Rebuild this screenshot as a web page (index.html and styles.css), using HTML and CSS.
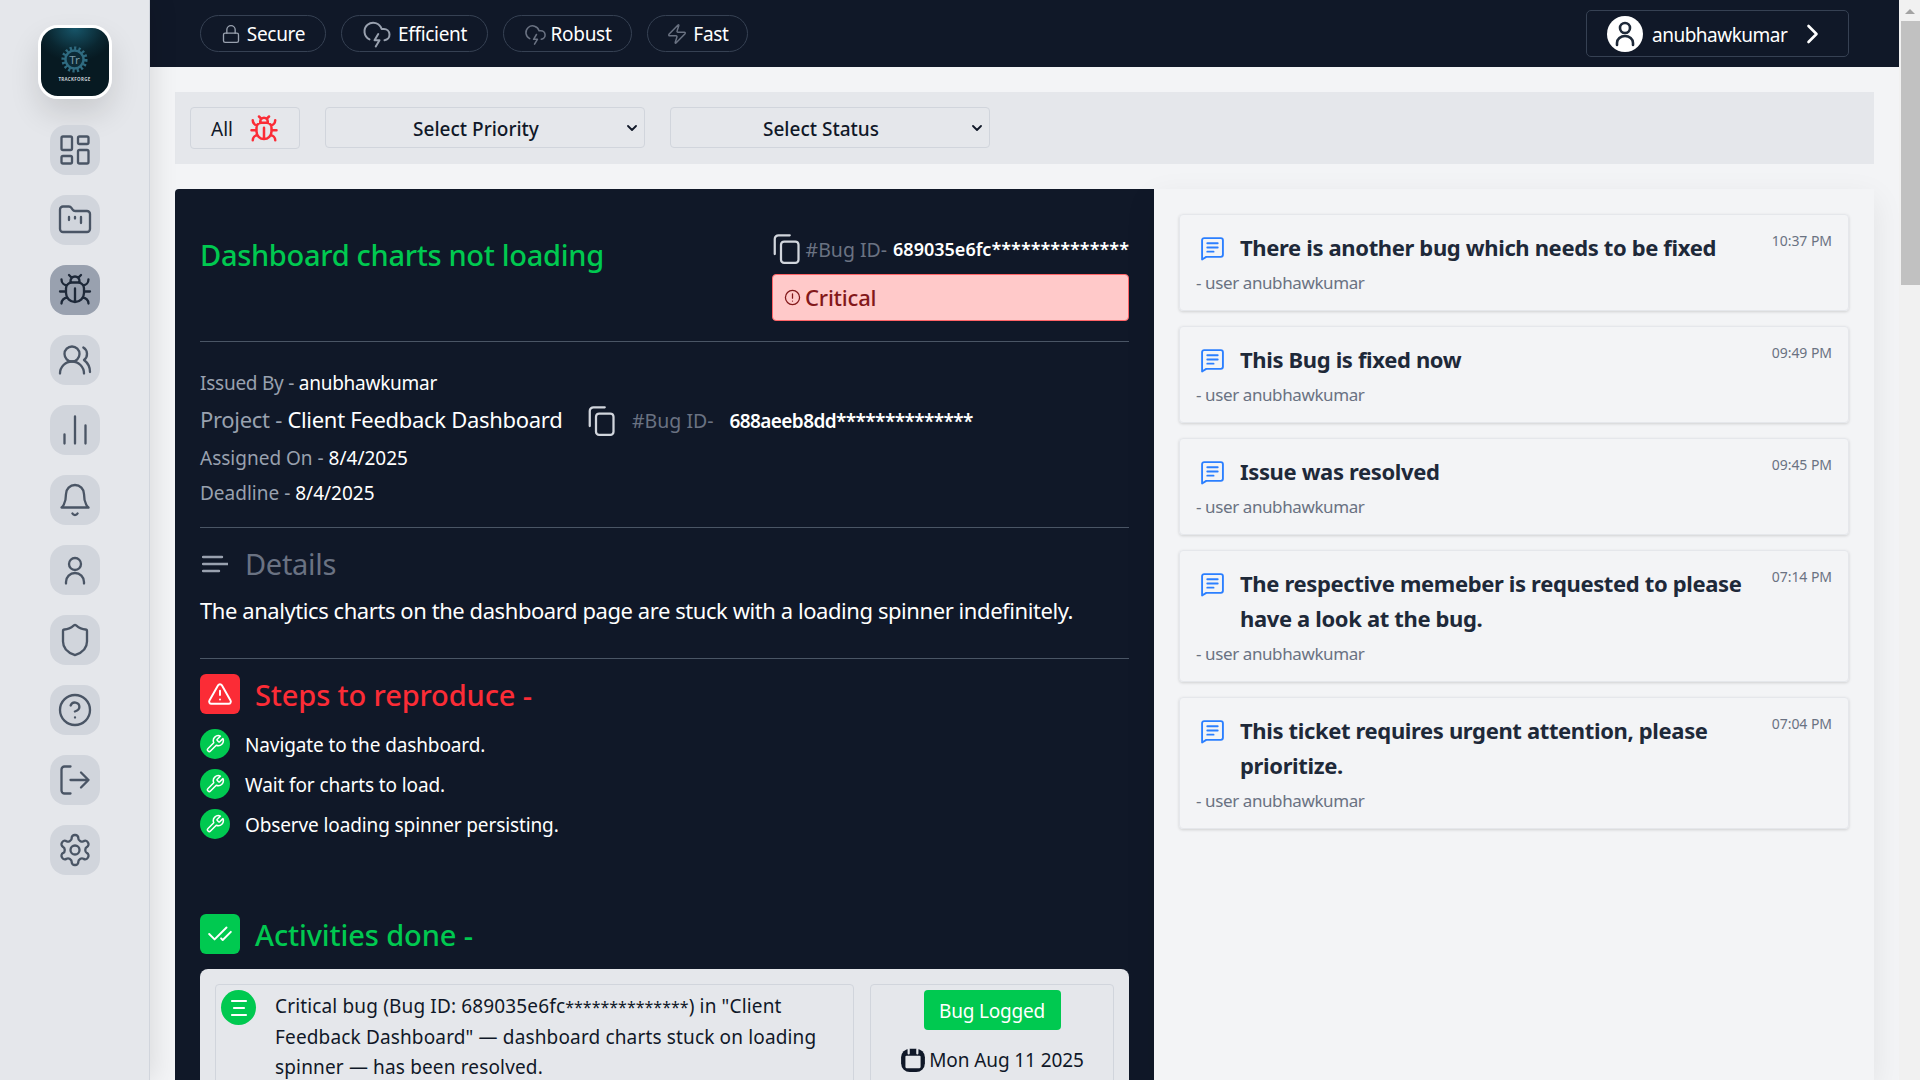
FILE: index.html
```html
<!DOCTYPE html>
<html lang="en">
<head>
    <meta charset="UTF-8">
    <meta name="viewport" content="width=device-width, initial-scale=1.0">
    <title>TrackForge - Bugs</title>
    <link rel="stylesheet" href="styles.css">
</head>
<body>
    <!-- shared icons -->
    <svg class="defs" aria-hidden="true">
        <symbol id="i-bug" viewBox="0 0 24 24"><path d="m8 2 1.88 1.88M14.12 3.88 16 2M9 7.13v-1a3.003 3.003 0 1 1 6 0v1M12 20c-3.3 0-6-2.7-6-6v-3a4 4 0 0 1 4-4h4a4 4 0 0 1 4 4v3c0 3.3-2.7 6-6 6M12 20v-9M6.53 9C4.6 8.8 3 7.1 3 5M6 13H2M3 21c0-2.1 1.7-3.9 3.8-4M20.97 5c0 2.1-1.6 3.8-3.5 4M22 13h-4M17.2 17c2.1.1 3.8 1.9 3.8 4"/></symbol>
        <symbol id="i-cloud" viewBox="0 0 24 24"><path d="M6 16.326A7 7 0 1 1 15.71 8h1.79a4.5 4.5 0 0 1 .5 8.973M13 12l-3 5h4l-3 5"/></symbol>
        <symbol id="i-copy" viewBox="0 0 24 24"><rect x="8" y="6" width="14" height="17" rx="2.5"/><path d="M3 16V4a3 3 0 0 1 3-3h9"/></symbol>
        <symbol id="i-wrench" viewBox="0 0 24 24"><path d="M14.7 6.3a1 1 0 0 0 0 1.4l1.6 1.6a1 1 0 0 0 1.4 0l3.77-3.77a6 6 0 0 1-7.94 7.94l-6.91 6.91a2.12 2.12 0 0 1-3-3l6.91-6.91a6 6 0 0 1 7.94-7.94l-3.76 3.76z"/></symbol>
        <symbol id="i-msg" viewBox="0 0 24 24"><path d="M4 2h16a2 2 0 0 1 2 2v14a2 2 0 0 1-2 2H6l-4 2.5V4a2 2 0 0 1 2-2z"/><path d="M7 7h10M7 11h10M7 15h6"/></symbol>
    </svg>

    <div class="app">
        <!-- Sidebar -->
        <aside class="sidebar">
            <div class="logo">
                <svg class="logo-gear" viewBox="0 0 40 40">
                    <circle cx="20" cy="20" r="15.5" class="gear-teeth"/>
                    <circle cx="20" cy="20" r="12.5" class="gear-ring"/>
                    <text x="20" y="26" text-anchor="middle" class="gear-t">Tr</text>
                </svg>
                <span class="logo-text">TRACKFORGE</span>
            </div>
            <nav class="nav">
                <a class="nav-item"><svg viewBox="0 0 24 24"><rect x="3" y="3" width="7" height="9" rx="1"/><rect x="14" y="3" width="7" height="5" rx="1"/><rect x="14" y="12" width="7" height="9" rx="1"/><rect x="3" y="16" width="7" height="5" rx="1"/></svg></a>
                <a class="nav-item"><svg viewBox="0 0 24 24"><path d="M4 20h16a2 2 0 0 0 2-2V8a2 2 0 0 0-2-2h-7.93a2 2 0 0 1-1.66-.9l-.82-1.2A2 2 0 0 0 7.93 3H4a2 2 0 0 0-2 2v13c0 1.1.9 2 2 2ZM8 10v2M12 10v1M16 10v4"/></svg></a>
                <a class="nav-item active"><svg><use href="#i-bug"/></svg></a>
                <a class="nav-item"><svg viewBox="0 0 24 24"><path d="M18 21a8 8 0 0 0-16 0"/><circle cx="10" cy="8" r="5"/><path d="M22 20c0-3.37-2-6.5-4-8a5 5 0 0 0-.45-8.3"/></svg></a>
                <a class="nav-item"><svg viewBox="0 0 24 24"><path d="M5 21v-6M12 21V3M19 21V9"/></svg></a>
                <a class="nav-item"><svg viewBox="0 0 24 24"><path d="M6 8a6 6 0 0 1 12 0c0 7 3 9 3 9H3s3-2 3-9M10.3 21a1.94 1.94 0 0 0 3.4 0"/></svg></a>
                <a class="nav-item"><svg viewBox="0 0 24 24"><circle cx="12" cy="8" r="4"/><path d="M18 21v-1a6 6 0 0 0-12 0v1"/></svg></a>
                <a class="nav-item"><svg viewBox="0 0 24 24"><path d="M20 13c0 5-3.5 7.5-7.66 8.95a1 1 0 0 1-.67-.01C7.5 20.5 4 18 4 13V6a1 1 0 0 1 1-1c2 0 4.5-1.2 6.24-2.72a1.17 1.17 0 0 1 1.52 0C14.51 3.81 17 5 19 5a1 1 0 0 1 1 1z"/></svg></a>
                <a class="nav-item"><svg viewBox="0 0 24 24"><circle cx="12" cy="12" r="10"/><path d="M9.09 9a3 3 0 0 1 5.83 1c0 2-3 3-3 3M12 17h.01"/></svg></a>
                <a class="nav-item"><svg viewBox="0 0 24 24"><path d="M9 21H5a2 2 0 0 1-2-2V5a2 2 0 0 1 2-2h4M16 17l5-5-5-5M21 12H9"/></svg></a>
                <a class="nav-item"><svg viewBox="0 0 24 24"><path d="M12.22 2h-.44a2 2 0 0 0-2 2v.18a2 2 0 0 1-1 1.73l-.43.25a2 2 0 0 1-2 0l-.15-.08a2 2 0 0 0-2.73.73l-.22.38a2 2 0 0 0 .73 2.73l.15.1a2 2 0 0 1 1 1.72v.51a2 2 0 0 1-1 1.74l-.15.09a2 2 0 0 0-.73 2.73l.22.38a2 2 0 0 0 2.73.73l.15-.08a2 2 0 0 1 2 0l.43.25a2 2 0 0 1 1 1.73V20a2 2 0 0 0 2 2h.44a2 2 0 0 0 2-2v-.18a2 2 0 0 1 1-1.73l.43-.25a2 2 0 0 1 2 0l.15.08a2 2 0 0 0 2.73-.73l.22-.39a2 2 0 0 0-.73-2.73l-.15-.08a2 2 0 0 1-1-1.74v-.5a2 2 0 0 1 1-1.74l.15-.09a2 2 0 0 0 .73-2.73l-.22-.38a2 2 0 0 0-2.73-.73l-.15.08a2 2 0 0 1-2 0l-.43-.25a2 2 0 0 1-1-1.73V4a2 2 0 0 0-2-2z"/><circle cx="12" cy="12" r="3"/></svg></a>
            </nav>
        </aside>

        <div class="main">
            <!-- Top bar -->
            <header class="topbar">
                <div class="pills">
                    <span class="pill pill-secure"><svg viewBox="0 0 24 24"><rect x="3" y="11" width="18" height="11" rx="2"/><path d="M7 11V7a5 5 0 0 1 10 0v4"/></svg>Secure</span>
                    <span class="pill pill-efficient"><svg><use href="#i-cloud"/></svg>Efficient</span>
                    <span class="pill pill-robust"><svg><use href="#i-cloud"/></svg>Robust</span>
                    <span class="pill pill-fast"><svg viewBox="0 0 24 24"><path d="M4 14a1 1 0 0 1-.78-1.63l9.9-10.2a.5.5 0 0 1 .86.46l-1.92 6.02A1 1 0 0 0 13 10h7a1 1 0 0 1 .78 1.63l-9.9 10.2a.5.5 0 0 1-.86-.46l1.92-6.02A1 1 0 0 0 11 14z"/></svg>Fast</span>
                </div>
                <button class="user-btn">
                    <svg class="avatar" viewBox="0 0 36 36">
                        <circle cx="18" cy="18" r="18" class="avatar-bg"/>
                        <circle cx="18" cy="12" r="5"/>
                        <path d="M10 29v-2a8 7 0 0 1 16 0v2"/>
                    </svg>
                    <span class="user-name">anubhawkumar</span>
                    <svg class="chevron" viewBox="0 0 12 20"><path d="m2 2 8 8-8 8"/></svg>
                </button>
            </header>

            <div class="content">
                <!-- Filters -->
                <div class="filters">
                    <button class="filter-all">All <svg class="filter-bug"><use href="#i-bug"/></svg></button>
                    <select class="filter-select">
                        <option>Select Priority</option>
                        <option>Critical</option>
                        <option>High</option>
                        <option>Medium</option>
                        <option>Low</option>
                    </select>
                    <select class="filter-select">
                        <option>Select Status</option>
                        <option>Open</option>
                        <option>Resolved</option>
                    </select>
                </div>

                <div class="columns">
                    <!-- Bug detail -->
                    <section class="bug-card">
                        <div class="bug-head">
                            <h2 class="bug-title">Dashboard charts not loading</h2>
                            <div class="bug-side">
                                <div class="bug-id">
                                    <svg class="copy"><use href="#i-copy"/></svg>
                                    <span class="id-label">#Bug ID-</span>
                                    <span class="id-value">689035e6fc**************</span>
                                </div>
                                <div class="badge">
                                    <svg viewBox="0 0 24 24"><circle cx="12" cy="12" r="10"/><path d="M12 7v6M12 17h.01"/></svg>
                                    <span class="badge-text">Critical</span>
                                </div>
                            </div>
                        </div>

                        <div class="meta">
                            <p class="meta-row meta-issued">Issued By - <b>anubhawkumar</b></p>
                            <div class="meta-project">
                                <p class="project-name">Project - <b>Client Feedback Dashboard</b></p>
                                <svg class="copy"><use href="#i-copy"/></svg>
                                <span class="id-label">#Bug ID-</span>
                                <span class="id-value">688aeeb8dd**************</span>
                            </div>
                            <p class="meta-row">Assigned On - <b>8/4/2025</b></p>
                            <p class="meta-row">Deadline - <b>8/4/2025</b></p>
                        </div>

                        <div class="details">
                            <h3 class="details-title">
                                <svg viewBox="0 0 26 18"><path d="M1 2h19M1 9h25M1 16h16"/></svg>
                                Details
                            </h3>
                            <p class="details-text">The analytics charts on the dashboard page are stuck with a loading spinner indefinitely.</p>
                        </div>

                        <div class="steps">
                            <h3 class="section-title red">
                                <span class="section-icon"><svg viewBox="0 0 24 24"><path d="m21.73 18-8-14a2 2 0 0 0-3.48 0l-8 14A2 2 0 0 0 4 21h16a2 2 0 0 0 1.73-3M12 9v4M12 17h.01"/></svg></span>
                                <span class="section-text">Steps to reproduce -</span>
                            </h3>
                            <ul class="step-list">
                                <li><span class="step-dot"><svg><use href="#i-wrench"/></svg></span><span class="step-text">Navigate to the dashboard.</span></li>
                                <li><span class="step-dot"><svg><use href="#i-wrench"/></svg></span><span class="step-text">Wait for charts to load.</span></li>
                                <li><span class="step-dot"><svg><use href="#i-wrench"/></svg></span><span class="step-text">Observe loading spinner persisting.</span></li>
                            </ul>
                        </div>

                        <h3 class="section-title green">
                            <span class="section-icon"><svg viewBox="0 0 24 24"><path d="M18 6 7 17l-5-5M22 10l-7.5 7.5L13 16"/></svg></span>
                            <span class="section-text">Activities done -</span>
                        </h3>
                        <div class="activities">
                            <div class="activity-text">
                                <span class="activity-dot"><svg viewBox="0 0 24 24"><path d="M5 5h14M7 12h10M5 19h14"/></svg></span>
                                <p>Critical bug (Bug ID: 689035e6fc<span class="stars">**************</span>) in "Client<br>Feedback Dashboard" — dashboard charts stuck on loading<br>spinner — has been resolved.</p>
                            </div>
                            <div class="activity-side">
                                <span class="logged">Bug Logged</span>
                                <span class="activity-date">
                                    <svg viewBox="0 0 24 24"><rect x="1" y="1.5" width="22" height="21.5" rx="8" class="cal-body"/><rect x="5" y="8" width="14" height="11.5" rx="1" class="cal-page"/><path d="M8 2v4M16 2v4" class="cal-pin"/></svg>
                                    Mon Aug 11 2025
                                </span>
                            </div>
                        </div>
                    </section>

                    <!-- Comments -->
                    <section class="comments">
                        <article class="comment">
                            <svg class="comment-icon"><use href="#i-msg"/></svg>
                            <h4 class="comment-title">There is another bug which needs to be fixed</h4>
                            <time class="comment-time">10:37 PM</time>
                            <p class="comment-user">- user anubhawkumar</p>
                        </article>
                        <article class="comment">
                            <svg class="comment-icon"><use href="#i-msg"/></svg>
                            <h4 class="comment-title">This Bug is fixed now</h4>
                            <time class="comment-time">09:49 PM</time>
                            <p class="comment-user">- user anubhawkumar</p>
                        </article>
                        <article class="comment">
                            <svg class="comment-icon"><use href="#i-msg"/></svg>
                            <h4 class="comment-title">Issue was resolved</h4>
                            <time class="comment-time">09:45 PM</time>
                            <p class="comment-user">- user anubhawkumar</p>
                        </article>
                        <article class="comment">
                            <svg class="comment-icon"><use href="#i-msg"/></svg>
                            <h4 class="comment-title">The respective memeber is requested to please have a look at the bug.</h4>
                            <time class="comment-time">07:14 PM</time>
                            <p class="comment-user">- user anubhawkumar</p>
                        </article>
                        <article class="comment">
                            <svg class="comment-icon"><use href="#i-msg"/></svg>
                            <h4 class="comment-title">This ticket requires urgent attention, please prioritize.</h4>
                            <time class="comment-time">07:04 PM</time>
                            <p class="comment-user">- user anubhawkumar</p>
                        </article>
                    </section>
                </div>
            </div>
        </div>

        <!-- Scrollbar -->
        <div class="scrollbar">
            <span class="scroll-arrow"></span>
            <span class="scroll-thumb"></span>
        </div>
    </div>
</body>
</html>
```

FILE: styles.css
```css
* {
    box-sizing: border-box;
}
html, body {
    margin: 0;
    height: 100%;
    overflow: hidden;
}
body {
    font-family: "Noto Sans", "Open Sans", sans-serif;
    background-color: #f3f4f6;
    color: #101828;
}
h2, h3, h4, p, ul {
    margin: 0;
    padding: 0;
}
svg {
    fill: none;
    stroke: currentColor;
    stroke-width: 2;
    stroke-linecap: round;
    stroke-linejoin: round;
    flex-shrink: 0;
}
.defs {
    display: none;
}
.app {
    display: flex;
    height: 1080px;
}

/* Sidebar */
.sidebar {
    position: relative;
    z-index: 2;
    width: 150px;
    flex-shrink: 0;
    background-color: #e5e7eb;
    border-right: 1px solid #d1d5dc;
    box-shadow: 4px 0 24px rgba(0,0,0,0.1);
    display: flex;
    flex-direction: column;
    align-items: center;
    padding-top: 25px;
}
.logo {
    width: 74px;
    height: 74px;
    border: 3px solid #fff;
    border-radius: 20px;
    background: radial-gradient(ellipse 60% 50% at 50% 0, #17566a, #0a2630 70%, #071a22);
    box-shadow: 0 15px 30px rgba(0,0,0,0.12);
    display: flex;
    flex-direction: column;
    align-items: center;
    padding-top: 17px;
    margin-bottom: 26px;
}
.logo-gear {
    width: 29px;
    height: 29px;
    color: #2f6b80;
}
.gear-teeth {
    stroke-width: 5;
    stroke-dasharray: 3 3;
    stroke-linecap: butt;
}
.gear-ring {
    stroke-width: 3.5;
    fill: #0c2a35;
}
.gear-t {
    font-size: 16px;
    fill: #7b9aa6;
    stroke: none;
}
.logo-text {
    font-size: 4.5px;
    font-weight: 700;
    color: #c5ced2;
    letter-spacing: 0.3px;
    margin-top: 2px;
}
.nav {
    display: flex;
    flex-direction: column;
    gap: 20px;
}
.nav-item {
    width: 50px;
    height: 50px;
    border-radius: 16px;
    background-color: #d1d5dc;
    color: #4a5565;
    display: flex;
    align-items: center;
    justify-content: center;
}
.nav-item svg {
    width: 36px;
    height: 36px;
    stroke-width: 1.55;
}
.nav-item.active {
    background-color: #99a1af;
    color: #1e2939;
}

.main {
    flex: 1;
    min-width: 0;
    display: flex;
    flex-direction: column;
}

/* Top bar */
.topbar {
    height: 67px;
    flex-shrink: 0;
    background-color: #101828;
    display: flex;
    align-items: center;
    justify-content: space-between;
    padding: 0 50px 0 50px;
}
.pills {
    display: flex;
    gap: 15px;
}
.pill {
    height: 37px;
    border: 1px solid #364153;
    border-radius: 19px;
    color: #fff;
    font-size: 19px;
    letter-spacing: -0.3px;
    padding-top: 1px;
    display: flex;
    align-items: center;
    justify-content: center;
    gap: 6px;
}
.pill-secure { width: 126px; }
.pill-efficient { width: 147px; }
.pill-robust { width: 129px; gap: 4px; }
.pill-fast { width: 101px; gap: 5px; }
.pill svg {
    color: #99a1af;
    width: 20px;
    height: 20px;
    stroke-width: 1.6;
}
.pill-efficient svg {
    width: 30px;
    height: 30px;
}
.pill-robust svg {
    width: 23px;
    height: 23px;
}
.pill-fast svg {
    width: 22px;
    height: 22px;
}
.pill-robust svg, .pill-fast svg {
    color: #6a7282;
}
.user-btn {
    width: 263px;
    height: 47px;
    background: none;
    border: 1px solid #364153;
    border-radius: 5px;
    color: #fff;
    font: inherit;
    font-size: 19px;
    letter-spacing: -0.5px;
    display: flex;
    align-items: center;
    padding: 0 0 0 20px;
}
.avatar {
    width: 36px;
    height: 36px;
    color: #1e2939;
    stroke-width: 2.6;
}
.avatar-bg {
    fill: #fff;
    stroke: none;
}
.user-name {
    margin-left: 9px;
    padding-top: 2px;
}
.chevron {
    width: 13px;
    height: 20px;
    margin-left: 19px;
    stroke-width: 2.6;
}

/* Filters */
.content {
    flex: 1;
    min-height: 0;
    padding: 25px 25px 0;
    display: flex;
    flex-direction: column;
    gap: 25px;
}
.filters {
    height: 72px;
    flex-shrink: 0;
    background-color: #e5e7eb;
    display: flex;
    align-items: flex-start;
    gap: 25px;
    padding: 15px 15px 0;
}
.filter-all {
    width: 110px;
    height: 42px;
    background: none;
    border: 1px solid #d1d5dc;
    border-radius: 4px;
    font: inherit;
    font-size: 19px;
    color: #101828;
    display: flex;
    align-items: center;
    gap: 16px;
    padding: 1px 0 0 20px;
}
.filter-bug {
    width: 30px;
    height: 30px;
    color: #fb2c36;
}
.filter-select {
    width: 320px;
    height: 41px;
    appearance: none;
    background: transparent url("data:image/svg+xml,%3Csvg xmlns='http://www.w3.org/2000/svg' viewBox='0 0 10 6'%3E%3Cpath d='M1 1l4 4 4-4' fill='none' stroke='%23101828' stroke-width='1.8' stroke-linecap='round' stroke-linejoin='round'/%3E%3C/svg%3E") no-repeat right 7px center / 10px 6px;
    border: 1px solid #d1d5dc;
    border-radius: 4px;
    font-family: inherit;
    font-size: 19px;
    font-weight: 500;
    color: #101828;
    text-align: center;
    text-align-last: center;
    padding: 2px 18px 0 0;
}

.columns {
    flex: 1;
    min-height: 0;
    display: grid;
    grid-template-columns: 979px 1fr;
}

/* Bug detail card */
.bug-card {
    background-color: #101828;
    color: #fff;
    padding: 46px 25px 0;
    overflow: hidden;
    border-radius: 4px 0 0 0;
}
.bug-head {
    display: flex;
    justify-content: space-between;
    padding-bottom: 20px;
    border-bottom: 1px solid #4a5565;
}
.bug-title {
    font-size: 29px;
    font-weight: 500;
    letter-spacing: -0.3px;
    line-height: 40px;
    color: #00c950;
}
.bug-side {
    width: 357px;
    display: flex;
    flex-direction: column;
    gap: 9px;
}
.bug-id {
    height: 30px;
    display: flex;
    align-items: center;
    justify-content: flex-end;
    white-space: nowrap;
    font-size: 18px;
    padding-bottom: 2px;
}
.copy {
    width: 30px;
    height: 30px;
    color: #d1d5dc;
    stroke-width: 1.8;
}
.id-label {
    color: #6a7282;
    font-size: 19.5px;
    margin-left: 5px;
}
.id-value {
    color: #fff;
    font-weight: 600;
    font-size: 18px;
    margin-left: 6px;
}
.badge {
    height: 47px;
    background-color: #ffc9c9;
    border: 1px solid #ff6467;
    border-radius: 4px;
    color: #82181a;
    font-size: 22px;
    font-weight: 500;
    letter-spacing: -0.2px;
    display: flex;
    align-items: center;
    gap: 4px;
    padding-left: 11px;
}
.badge-text {
    padding-bottom: 2px;
}
.badge svg {
    width: 17px;
    height: 17px;
    stroke-width: 1.8;
}
.meta {
    display: flex;
    flex-direction: column;
    gap: 7px;
    padding: 27px 0 20px;
    border-bottom: 1px solid #4a5565;
}
.meta-row {
    font-size: 19px;
    line-height: 28px;
    color: #99a1af;
}
.meta-issued {
    letter-spacing: -0.25px;
}
.meta-row b, .project-name b {
    font-weight: 400;
    color: #fff;
}
.meta-project {
    height: 33px;
    display: flex;
    align-items: center;
}
.project-name {
    font-size: 22px;
    letter-spacing: -0.3px;
    color: #99a1af;
    width: 386px;
    white-space: nowrap;
    padding-bottom: 3px;
}
.meta-project .id-label {
    margin-left: 16px;
}
.meta-project .id-value {
    margin-left: 16px;
    font-size: 19px;
    letter-spacing: -0.6px;
}
.details {
    padding: 14px 0 31px;
    border-bottom: 1px solid #4a5565;
}
.details-title {
    font-size: 29px;
    font-weight: 400;
    line-height: 44px;
    letter-spacing: -0.3px;
    color: #6a7282;
    display: flex;
    align-items: center;
    gap: 17px;
    padding-left: 2px;
}
.details-title svg {
    width: 26px;
    height: 18px;
    color: #99a1af;
    stroke-width: 2.4;
}
.details-text {
    font-size: 22px;
    letter-spacing: -0.43px;
    line-height: 34px;
    margin-top: 7px;
    white-space: nowrap;
}
.steps {
    padding-top: 15px;
}
.section-title {
    height: 40px;
    font-size: 29px;
    font-weight: 500;
    letter-spacing: -0.12px;
    line-height: 38px;
    display: flex;
    align-items: center;
    gap: 15px;
}
.section-text {
    padding-top: 2px;
}
.section-title.red { color: #fb2c36; }
.section-title.green { color: #00c950; margin-top: 75px; }
.section-icon {
    width: 40px;
    height: 40px;
    border-radius: 6px;
    color: #fff;
    display: flex;
    align-items: center;
    justify-content: center;
}
.red .section-icon { background-color: #fb2c36; }
.green .section-icon { background-color: #00c950; }
.section-icon svg {
    width: 26px;
    height: 26px;
    stroke-width: 1.8;
}
.step-list {
    list-style: none;
    display: flex;
    flex-direction: column;
    gap: 10px;
    margin-top: 15px;
}
.step-list li {
    display: flex;
    align-items: center;
    gap: 15px;
    height: 30px;
    font-size: 19px;
    letter-spacing: -0.12px;
}
.step-text {
    padding-top: 2px;
}
.step-dot {
    width: 30px;
    height: 30px;
    border-radius: 50%;
    background-color: #00c950;
    display: flex;
    align-items: center;
    justify-content: center;
}
.step-dot svg {
    width: 20px;
    height: 20px;
    stroke-width: 1.8;
}
.activities {
    margin-top: 15px;
    background-color: #e5e7eb;
    border-radius: 8px;
    padding: 15px;
    display: flex;
    gap: 16px;
    color: #101828;
}
.activity-text {
    width: 639px;
    border: 1px solid #d1d5dc;
    border-radius: 4px;
    padding: 5px;
    display: flex;
    gap: 19px;
    flex-shrink: 0;
}
.activity-text p {
    font-size: 19px;
    letter-spacing: 0.15px;
    line-height: 30px;
    margin-top: 1px;
}
.stars {
    font-size: 16px;
    letter-spacing: 0;
}
.activity-dot {
    width: 35px;
    height: 35px;
    border-radius: 50%;
    background-color: #00c950;
    color: #fff;
    display: flex;
    align-items: center;
    justify-content: center;
    flex-shrink: 0;
}
.activity-dot svg {
    width: 24px;
    height: 24px;
    stroke-width: 2.2;
}
.activity-side {
    flex: 1;
    border: 1px solid #d1d5dc;
    border-radius: 4px;
    padding-top: 5px;
    display: flex;
    flex-direction: column;
    align-items: center;
    gap: 17px;
}
.logged {
    width: 137px;
    height: 40px;
    border-radius: 4px;
    background-color: #00c950;
    color: #fff;
    font-size: 19px;
    letter-spacing: -0.2px;
    padding-top: 2px;
    display: flex;
    align-items: center;
    justify-content: center;
}
.activity-date {
    display: flex;
    align-items: center;
    gap: 3px;
    font-size: 19px;
    letter-spacing: -0.1px;
    white-space: nowrap;
}
.activity-date svg {
    width: 26px;
    height: 26px;
}
.cal-body {
    fill: #101828;
    stroke: none;
}
.cal-page {
    fill: #e5e7eb;
    stroke: none;
}
.cal-pin {
    stroke: #e5e7eb;
}

/* Comments */
.comments {
    background-color: #f3f4f6;
    padding: 25px 25px 0;
    display: flex;
    flex-direction: column;
    gap: 15px;
    box-shadow: 0 10px 30px rgba(0,0,0,0.08);
}
.comment {
    border: 1px solid #e5e7eb;
    border-radius: 4px;
    box-shadow: 0 1px 3px rgba(0,0,0,0.15);
    padding: 15px 15px 15px;
    display: grid;
    grid-template-columns: 5px 25px minmax(0, 1fr) auto;
    grid-template-areas:
        "pad icon title time"
        "user user user user";
}
.comment-icon {
    grid-area: icon;
    width: 25px;
    height: 25px;
    margin-top: 6px;
    color: #2b7fff;
    stroke-width: 1.8;
}
.comment-title {
    grid-area: title;
    font-size: 22px;
    font-weight: 700;
    letter-spacing: -0.36px;
    line-height: 35px;
    color: #1e2939;
    padding: 0 20px 0 15px;
}
.comment-time {
    grid-area: time;
    font-size: 14px;
    letter-spacing: -0.05px;
    line-height: 20px;
    color: #6a7282;
    padding-right: 1px;
    padding-top: 1px;
}
.comment-user {
    grid-area: user;
    font-size: 17px;
    letter-spacing: -0.4px;
    line-height: 24px;
    color: #6a7282;
    margin-top: 6px;
    padding-left: 1px;
}

/* Scrollbar drawn by hand, the page itself does not scroll */
.scrollbar {
    width: 21px;
    flex-shrink: 0;
    background-color: #f1f1f1;
    display: flex;
    flex-direction: column;
    align-items: flex-end;
}
.scroll-arrow {
    width: 0;
    height: 0;
    border: 5px solid transparent;
    border-top: 0;
    border-bottom: 5px solid #a3a3a3;
    margin: 9px 5px 7px 0;
}
.scroll-thumb {
    width: 19px;
    height: 264px;
    background-color: #c1c1c1;
}
```
